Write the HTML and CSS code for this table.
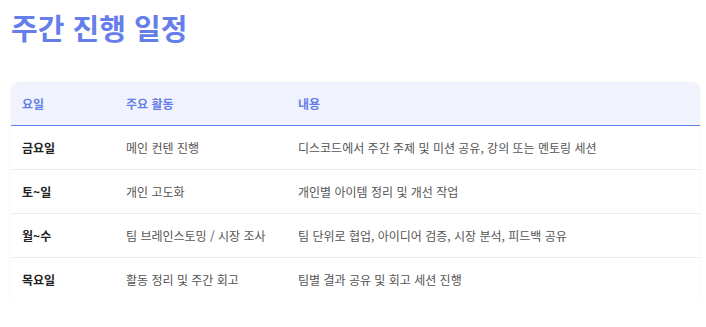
FILE: index.html
```html
<!DOCTYPE html>
<html lang="ko">
<head>
<meta charset="utf-8">
<title>주간 진행 일정</title>
<link rel="stylesheet" href="styles.css">
</head>
<body>
<main class="page">
  <h1 class="title">주간 진행 일정</h1>
  <div class="table-wrap">
    <table class="schedule">
      <colgroup>
        <col class="c-day">
        <col class="c-act">
        <col class="c-desc">
      </colgroup>
      <thead>
        <tr><th>요일</th><th>주요 활동</th><th>내용</th></tr>
      </thead>
      <tbody>
        <tr><td class="day">금요일</td><td>메인 컨텐 진행</td><td>디스코드에서 주간 주제 및 미션 공유, 강의 또는 멘토링 세션</td></tr>
        <tr><td class="day">토~일</td><td>개인 고도화</td><td>개인별 아이템 정리 및 개선 작업</td></tr>
        <tr><td class="day">월~수</td><td>팀 브레인스토밍 / 시장 조사</td><td>팀 단위로 협업, 아이디어 검증, 시장 분석, 피드백 공유</td></tr>
        <tr><td class="day">목요일</td><td>활동 정리 및 주간 회고</td><td>팀별 결과 공유 및 회고 세션 진행</td></tr>
      </tbody>
    </table>
  </div>
</main>
</body>
</html>
```

FILE: styles.css
```css
html, body {
  margin: 0;
  padding: 0;
  background: #ffffff;
}
.page {
  padding: 0 6px 0 11px;
  font-family: "Noto Sans CJK KR", "Noto Sans", sans-serif;
}
.title {
  margin: 0;
  padding-top: 7px;
  font-size: 29px;
  line-height: 40px;
  font-weight: 700;
  color: #667eea;
}
.table-wrap {
  margin-top: 35px;
  border-radius: 8px;
  overflow: hidden;
  box-shadow: 0 1px 4px rgba(0, 0, 0, 0.04);
}
.schedule {
  width: 100%;
  border-collapse: collapse;
  table-layout: fixed;
  font-size: 12px;
}
.c-day { width: 104px; }
.c-act { width: 172px; }
.schedule th {
  background: #f0f3fd;
  color: #667eea;
  font-weight: 700;
  text-align: left;
  height: 43px;
  padding: 0 11px;
  border-bottom: 1px solid #667eea;
  box-sizing: border-box;
}
.schedule td {
  height: 44px;
  padding: 0 11px;
  color: #555555;
  border-bottom: 1px solid #eeeeee;
  box-sizing: border-box;
  white-space: nowrap;
}
.schedule tbody tr:last-child td {
  border-bottom: none;
}
.schedule td.day {
  color: #222222;
  font-weight: 700;
}
```
